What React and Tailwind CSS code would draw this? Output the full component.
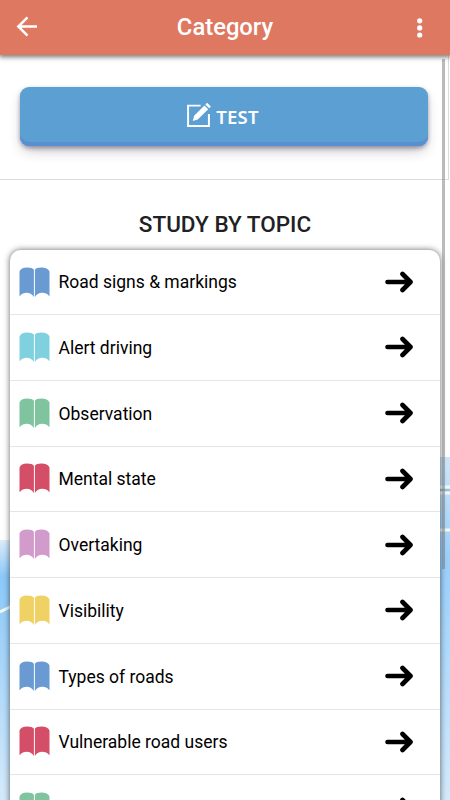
const topics = [
  { title: 'Road signs & markings', color: 'text-[#699bd2]' },
  { title: 'Alert driving', color: 'text-[#80d1e0]' },
  { title: 'Observation', color: 'text-[#80c49f]' },
  { title: 'Mental state', color: 'text-[#d54e67]' },
  { title: 'Overtaking', color: 'text-[#d19ccc]' },
  { title: 'Visibility', color: 'text-[#f0d163]' },
  { title: 'Types of roads', color: 'text-[#699bd2]' },
  { title: 'Vulnerable road users', color: 'text-[#d54e67]' },
  { title: '', color: 'text-[#80c49f]' },
]

const BookIcon = ({ className }) => (
  <svg className={className} viewBox="0 0 31 31" fill="currentColor">
    <path d="M.5 29V4.500C1.500 1.800 4 .5 8 .5c3.500 0 6 .8 6.900 2.200V30C13 27 10.500 25.800 7.800 25.800S2.500 26.800 .9 29Z" />
    <path d="M15.900 30V2.700C16.800 1.300 19 .5 22.500 .5c4 0 7 1.300 8 4V29h-.4c-1.500-2.200-4-3.200-6.900-3.200S17.800 27 15.900 30Z" />
  </svg>
)

const ArrowIcon = () => (
  <svg
    className="w-7 h-[22px] shrink-0"
    viewBox="0 0 28 22"
    fill="none"
    stroke="currentColor"
    strokeWidth="4.600"
    strokeLinecap="round"
    strokeLinejoin="round"
  >
    <path d="M2.500 11h22M17.500 3l8 8-8 8" />
  </svg>
)

const Header = () => (
  <header className="relative z-20 h-[55px] shrink-0 bg-[#df7860] text-white flex items-center justify-between px-4 shadow-[0_1px_5px_1px_rgba(0,0,0,0.55)]">
    <svg className="w-[22px] h-[22px] -translate-y-px" viewBox="0 0 22 22" fill="none" stroke="currentColor" strokeWidth="2.500">
      <path d="M21 10.500H3M11.500 1.300l-9.200 9.200 9.200 9.200" />
    </svg>
    <h1 className="pt-px text-[23.800px] leading-none font-medium">Category</h1>
    <svg className="w-[22px] h-[22px] -translate-x-[3px]" viewBox="0 0 22 22" fill="currentColor">
      <circle cx="10.700" cy="3.800" r="2.600" />
      <circle cx="10.700" cy="10.900" r="2.600" />
      <circle cx="10.700" cy="18" r="2.600" />
    </svg>
  </header>
)

// Sky picture behind the page, it only shows beside the list
const Sky = () => (
  <div className="absolute inset-0">
    <div className="absolute left-0 top-[540px] bottom-0 w-1/2 bg-linear-to-b from-[#dcecf9] via-[#8cc8f8] via-14% to-[#d4eafb]" />
    <div className="absolute right-0 top-[457px] bottom-0 w-1/2 bg-linear-to-b from-[#cfe6f8] via-[#99cffb] via-30% to-[#d4eafb]" />
    <svg className="absolute inset-0 w-full h-full" viewBox="0 0 450 800" fill="none" stroke="#f3f8f5" strokeWidth="3">
      <path d="M0 612L12 606M438 487h12M438 493h12M438 530h12" />
      <path d="M438 490h12" stroke="#8fc4e4" strokeWidth="2" />
    </svg>
  </div>
)

const App = () => {
  return (
    <div className="relative h-screen overflow-hidden bg-white flex flex-col font-[Roboto,sans-serif]">
      <Sky />
      <Header />

      <section className="relative h-[125px] shrink-0 w-[449px] bg-white border-b border-r border-[#dcdcdc] pl-5 pr-5 pt-8">
        <button className="w-[408px] h-[59px] rounded-[9px] bg-[#5b9fd3] text-white flex items-center justify-center gap-[5px] pr-[3px] shadow-[inset_0_-4px_0_#5790d2,0_2px_4px_rgba(45,35,66,0.4),0_7px_13px_-3px_rgba(45,35,66,0.3)]">
          <svg className="w-[25px] h-[25px] -translate-y-[1.500px]" viewBox="0 0 24 24" fill="none" stroke="currentColor" strokeWidth="1.900">
            <path d="M14 3H2v19.500h20V11" />
            <path d="M6.500 17.800l1.300-5L17.700 2.900l3.600 3.600L11.300 16.400Z" fill="currentColor" stroke="none" />
            <path d="M18.600 2l1.700-1.700 3.600 3.600-1.700 1.700Z" fill="currentColor" stroke="none" />
          </svg>
          <span className="text-[18.500px] font-semibold tracking-[0.2px] font-['Noto_Sans',sans-serif]">TEST</span>
        </button>
      </section>

      <h2 className="relative h-[70px] shrink-0 pt-[30px] text-center text-[22.500px] leading-7 font-medium text-[#202124]">
        STUDY BY TOPIC
      </h2>

      <ul className="relative mx-2.5 shrink-0 rounded-[11px] bg-white shadow-[0_0_6px_rgba(0,0,0,0.6)] text-black">
        {topics.map((topic, index) => (
          <li
            key={index}
            className="h-[65.750px] first:h-[65px] flex items-center border-b border-[#e5e5e5] pl-[9px] pr-[27px]"
          >
            <BookIcon className={`w-[31px] h-[31px] shrink-0 ${topic.color}`} />
            <span className="ml-[8.500px] pt-px flex-1 text-[17.500px]">{topic.title}</span>
            <ArrowIcon />
          </li>
        ))}
      </ul>

      {/* Scroll indicator */}
      <div className="absolute z-10 right-[5px] top-[59px] w-[3px] h-[510px] bg-[#777777]/50" />
    </div>
  )
}

export default App
